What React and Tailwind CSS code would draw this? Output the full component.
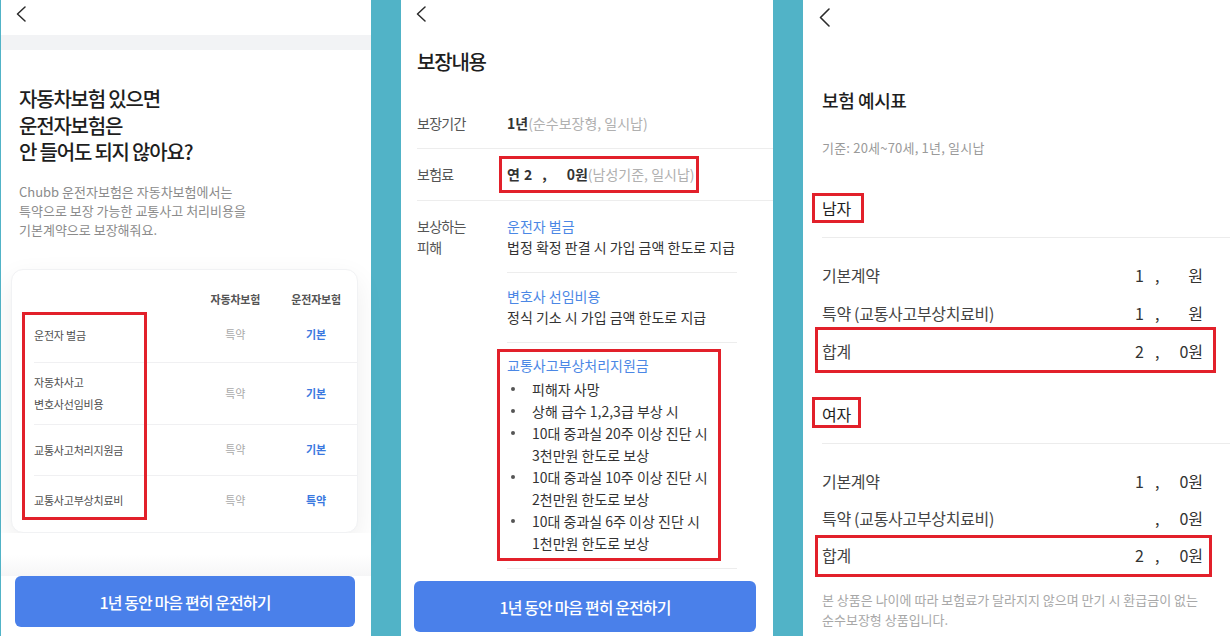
import React from 'react'

const font = { fontFamily: '"Noto Sans CJK KR", "Noto Sans", sans-serif' }

function Chevron({ big }) {
  if (big) {
    return (
      <svg width="11" height="19" viewBox="0 0 11 19" fill="none">
        <polyline points="10,1 1.5,9.5 10,18" stroke="#2b2b2b" strokeWidth="1.6" strokeLinecap="round" strokeLinejoin="round" />
      </svg>
    )
  }
  return (
    <svg width="10" height="16" viewBox="0 0 10 16" fill="none">
      <polyline points="9,1 1.5,8 9,15" stroke="#2b2b2b" strokeWidth="1.5" strokeLinecap="round" strokeLinejoin="round" />
    </svg>
  )
}

function RedBox({ className }) {
  return <div className={`absolute border-[3px] border-[#e2202a] pointer-events-none ${className}`} />
}

function BlueButton({ className }) {
  return (
    <button className={`bg-[#4a80ea] rounded-[6px] text-white text-[16px] font-medium tracking-[-0.9px] flex items-center justify-center ${className}`}>
      1년 동안 마음 편히 운전하기
    </button>
  )
}

const compareRows = [
  { label: ['운전자 벌금'], a: '특약', b: '기본', h: 'h-[54px]' },
  { label: ['자동차사고', '변호사선임비용'], a: '특약', b: '기본', h: 'h-[62px]' },
  { label: ['교통사고처리지원금'], a: '특약', b: '기본', h: 'h-[51px]' },
  { label: ['교통사고부상치료비'], a: '특약', b: '특약', h: 'h-[50px]' },
]

function PanelOne() {
  return (
    <div className="relative w-[370px] ml-[1px] h-full bg-white flex flex-col">
      <div className="h-[35px] pl-[15px] pt-[6px]">
        <Chevron />
      </div>
      <div className="h-[15px] bg-[#f2f3f5]" />
      <div className="mt-[36px] px-[18px] text-[20px] leading-[26.5px] font-medium text-[#1e1e1e] tracking-[-1.2px]">
        <p>자동차보험 있으면</p>
        <p>운전자보험은</p>
        <p>안 들어도 되지 않아요?</p>
      </div>
      <div className="mt-[16px] px-[18px] text-[13px] leading-[19px] text-[#8b8b8b]">
        <p>Chubb 운전자보험은 자동차보험에서는</p>
        <p>특약으로 보장 가능한 교통사고 처리비용을</p>
        <p>기본계약으로 보장해줘요.</p>
      </div>
      <div className="ml-[10px] mr-[13px] mt-[30px] rounded-[12px] bg-white border border-[#f1f2f4] shadow-[0_10px_28px_rgba(0,0,0,0.07)] pt-[22px] pb-[7px] pl-[22px]">
        <div className="flex h-[16px] items-center text-[11px] font-semibold text-[#555] tracking-[-0.2px]">
          <div className="w-[162px]" />
          <div className="w-[80px] text-center">자동차보험</div>
          <div className="w-[82px] text-center">운전자보험</div>
        </div>
        {compareRows.map((r, i) => (
          <div key={i} className={`flex items-center ${r.h} ${i > 0 ? 'border-t border-[#f0f0f2]' : ''}`}>
            <div className="w-[162px] text-[11px] leading-[22px] text-[#505050] tracking-[-0.2px]">
              {r.label.map((l) => (
                <p key={l}>{l}</p>
              ))}
            </div>
            <div className="w-[80px] text-center text-[11px] text-[#a9a9a9]">{r.a}</div>
            <div className="w-[82px] text-center text-[11px] font-semibold text-[#3a78e0]">{r.b}</div>
          </div>
        ))}
      </div>
      <div className="flex-1 bg-gradient-to-b from-white via-white to-[#f6f6f7]" />
      <div className="bg-white pb-[9px] pl-[14px] pr-[16px]">
        <BlueButton className="w-full h-[51px]" />
      </div>
      <RedBox className="left-[21px] top-[312px] w-[125px] h-[208px]" />
    </div>
  )
}

function Bullet({ lines }) {
  return (
    <div className="flex">
      <div className="w-[25px] h-[22px] flex items-center pl-[4px]">
        <div className="w-[3.5px] h-[3.5px] rounded-full bg-[#555]" />
      </div>
      <div>
        {lines.map((l) => (
          <p key={l}>{l}</p>
        ))}
      </div>
    </div>
  )
}

function PanelTwo() {
  return (
    <div className="relative w-[372px] h-full bg-white flex flex-col">
      <div className="h-[49px] pl-[15px] pt-[6px]">
        <Chevron />
      </div>
      <h1 className="pl-[16px] text-[20px] leading-[26px] font-medium text-[#1e1e1e] tracking-[-1.2px]">보장내용</h1>
      <div className="mt-[24px] ml-[16px]">
        <div className="h-[50px] flex items-center border-b border-[#ededed]">
          <div className="w-[90px] text-[14px] text-[#555] tracking-[-0.7px]">보장기간</div>
          <div className="text-[14px]">
            <span className="font-semibold text-[#333]">1년</span>
            <span className="text-[#b0b0b0]">(순수보장형, 일시납)</span>
          </div>
        </div>
        <div className="h-[52px] flex items-center border-b border-[#ededed]">
          <div className="w-[90px] text-[14px] text-[#555] tracking-[-0.7px]">보험료</div>
          <div className="text-[14px] flex items-baseline">
            <span className="font-semibold text-[#333]">연</span>
            <span className="font-semibold text-[#333] ml-[4px]">2</span>
            <span className="font-semibold text-[#333] ml-[10px]">,</span>
            <span className="font-semibold text-[#333] ml-[20px]">0원</span>
            <span className="text-[#b0b0b0]">(남성기준, 일시납)</span>
          </div>
        </div>
        <div className="flex">
          <div className="w-[90px] pt-[15px] text-[14px] leading-[21px] text-[#555] tracking-[-0.7px]">
            <p>보상하는</p>
            <p>피해</p>
          </div>
          <div className="w-[230px] text-[14px]">
            <div className="pt-[15px] pb-[14px] leading-[21px] border-b border-[#ededed]">
              <p className="text-[#4b87e5]">운전자 벌금</p>
              <p className="text-[#333]">법정 확정 판결 시 가입 금액 한도로 지급</p>
            </div>
            <div className="pt-[13px] pb-[14px] leading-[21px] border-b border-[#ededed]">
              <p className="text-[#4b87e5]">변호사 선임비용</p>
              <p className="text-[#333]">정식 기소 시 가입 금액 한도로 지급</p>
            </div>
            <div className="pt-[12px] pb-[14px] border-b border-[#ededed]">
              <p className="text-[#4b87e5] leading-[21px]">교통사고부상처리지원금</p>
              <div className="mt-[2px] leading-[22px] text-[#333]">
                <Bullet lines={['피해자 사망']} />
                <Bullet lines={['상해 급수 1,2,3급 부상 시']} />
                <Bullet lines={['10대 중과실 20주 이상 진단 시', '3천만원 한도로 보상']} />
                <Bullet lines={['10대 중과실 10주 이상 진단 시', '2천만원 한도로 보상']} />
                <Bullet lines={['10대 중과실 6주 이상 진단 시', '1천만원 한도로 보상']} />
              </div>
            </div>
          </div>
        </div>
      </div>
      <BlueButton className="mt-[12px] ml-[13px] w-[342px] h-[51px]" />
      <RedBox className="left-[98px] top-[156px] w-[200px] h-[37px]" />
      <RedBox className="left-[96px] top-[349px] w-[224px] h-[212px]" />
    </div>
  )
}

function Amount({ digit, zero = true }) {
  return (
    <div className="flex items-baseline text-[16px] text-[#333]">
      <span className="w-[20px]">{digit}</span>
      <span className="w-[24px]">,</span>
      <span className="w-[24px] text-right">
        <span className={zero ? '' : 'text-transparent'}>0</span>원
      </span>
    </div>
  )
}

function Rows({ items }) {
  return (
    <div className="mt-[18px] pr-[27px]">
      {items.map((it) => (
        <div key={it.label} className={`${it.h} flex items-center justify-between`}>
          <span className="text-[16px] text-[#444] tracking-[-0.3px]">{it.label}</span>
          <Amount digit={it.digit} zero={it.zero} />
        </div>
      ))}
    </div>
  )
}

function PanelThree() {
  return (
    <div className="relative flex-1 h-full bg-white flex flex-col">
      <div className="h-[87px] pl-[16px] pt-[8px]">
        <Chevron big />
      </div>
      <div className="pl-[19px]">
        <h1 className="text-[18px] leading-[26px] font-medium text-[#1e1e1e] tracking-[-0.4px]">보험 예시표</h1>
        <p className="mt-[26px] text-[13px] leading-[18px] text-[#9a9a9a] tracking-[0.2px]">기준: 20세~70세, 1년, 일시납</p>
        <p className="mt-[40px] text-[16px] leading-[22px] text-[#1e1e1e] tracking-[-0.3px]">남자</p>
        <div className="mt-[18px] h-[1px] bg-[#ececec]" />
        <Rows
          items={[
            { label: '기본계약', digit: '1', zero: false, h: 'h-[38px]' },
            { label: '특약 (교통사고부상치료비)', digit: '1', zero: false, h: 'h-[38px]' },
            { label: '합계', digit: '2', zero: true, h: 'h-[38px]' },
          ]}
        />
        <p className="mt-[33px] text-[16px] leading-[22px] text-[#1e1e1e] tracking-[-0.3px]">여자</p>
        <div className="mt-[18px] h-[1px] bg-[#ececec]" />
        <Rows
          items={[
            { label: '기본계약', digit: '1', zero: true, h: 'h-[37px]' },
            { label: '특약 (교통사고부상치료비)', digit: '', zero: true, h: 'h-[37px]' },
            { label: '합계', digit: '2', zero: true, h: 'h-[37px]' },
          ]}
        />
        <div className="mt-[17px] text-[13px] leading-[20px] text-[#a8a8a8]">
          <p>본 상품은 나이에 따라 보험료가 달라지지 않으며 만기 시 환급금이 없는</p>
          <p>순수보장형 상품입니다.</p>
        </div>
      </div>
      <RedBox className="left-[9px] top-[193px] w-[52px] h-[30px]" />
      <RedBox className="left-[12px] top-[327px] w-[401px] h-[46px]" />
      <RedBox className="left-[9px] top-[397px] w-[49px] h-[31px]" />
      <RedBox className="left-[12px] top-[535px] w-[397px] h-[42px]" />
    </div>
  )
}

export default function App() {
  return (
    <div style={font} className="w-[1230px] h-[636px] bg-[#51b3c7] flex gap-[30px] overflow-hidden">
      <PanelOne />
      <PanelTwo />
      <PanelThree />
    </div>
  )
}
